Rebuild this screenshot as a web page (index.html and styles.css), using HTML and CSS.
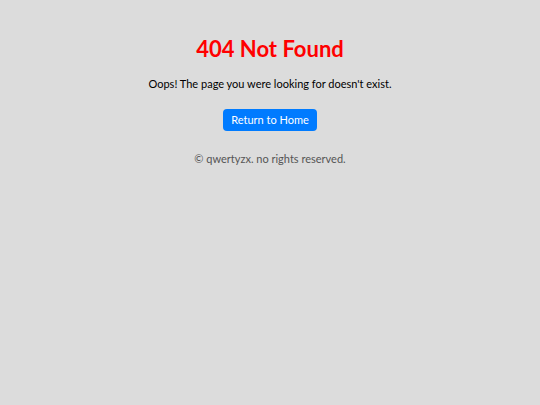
FILE: index.html
```html
<!DOCTYPE html>
<html lang="en">
<head>
<meta charset="utf-8">
<title>404 Not Found</title>
<link rel="stylesheet" href="styles.css">
</head>
<body>
<main class="page">
  <h1 class="title">404 Not Found</h1>
  <p class="message">Oops! The page you were looking for doesn't exist.</p>
  <a class="home-btn" href="#">Return to Home</a>
  <footer class="footer">© qwertyzx. no rights reserved.</footer>
</main>
</body>
</html>
```

FILE: styles.css
```css
html, body {
  margin: 0;
  padding: 0;
  background: #dcdcdc;
}
body {
  font-family: "Comic Sans MS", Lato, sans-serif;
  color: #000;
}
.page {
  display: flex;
  flex-direction: column;
  align-items: center;
  padding-top: 37px;
  text-align: center;
}
.title {
  margin: 0;
  color: #ff0000;
  font-size: 22px;
  font-weight: bold;
  line-height: 24px;
}
.message {
  margin: 15px 0 0;
  font-size: 11px;
  line-height: 16px;
}
.home-btn {
  margin-top: 17px;
  display: inline-block;
  background: #007bff;
  color: #fff;
  text-decoration: none;
  font-size: 11px;
  line-height: 22px;
  height: 22px;
  padding: 0 8px;
  border-radius: 4px;
}
.footer {
  margin-top: 20px;
  font-size: 11px;
  line-height: 16px;
  color: #555;
}
```
